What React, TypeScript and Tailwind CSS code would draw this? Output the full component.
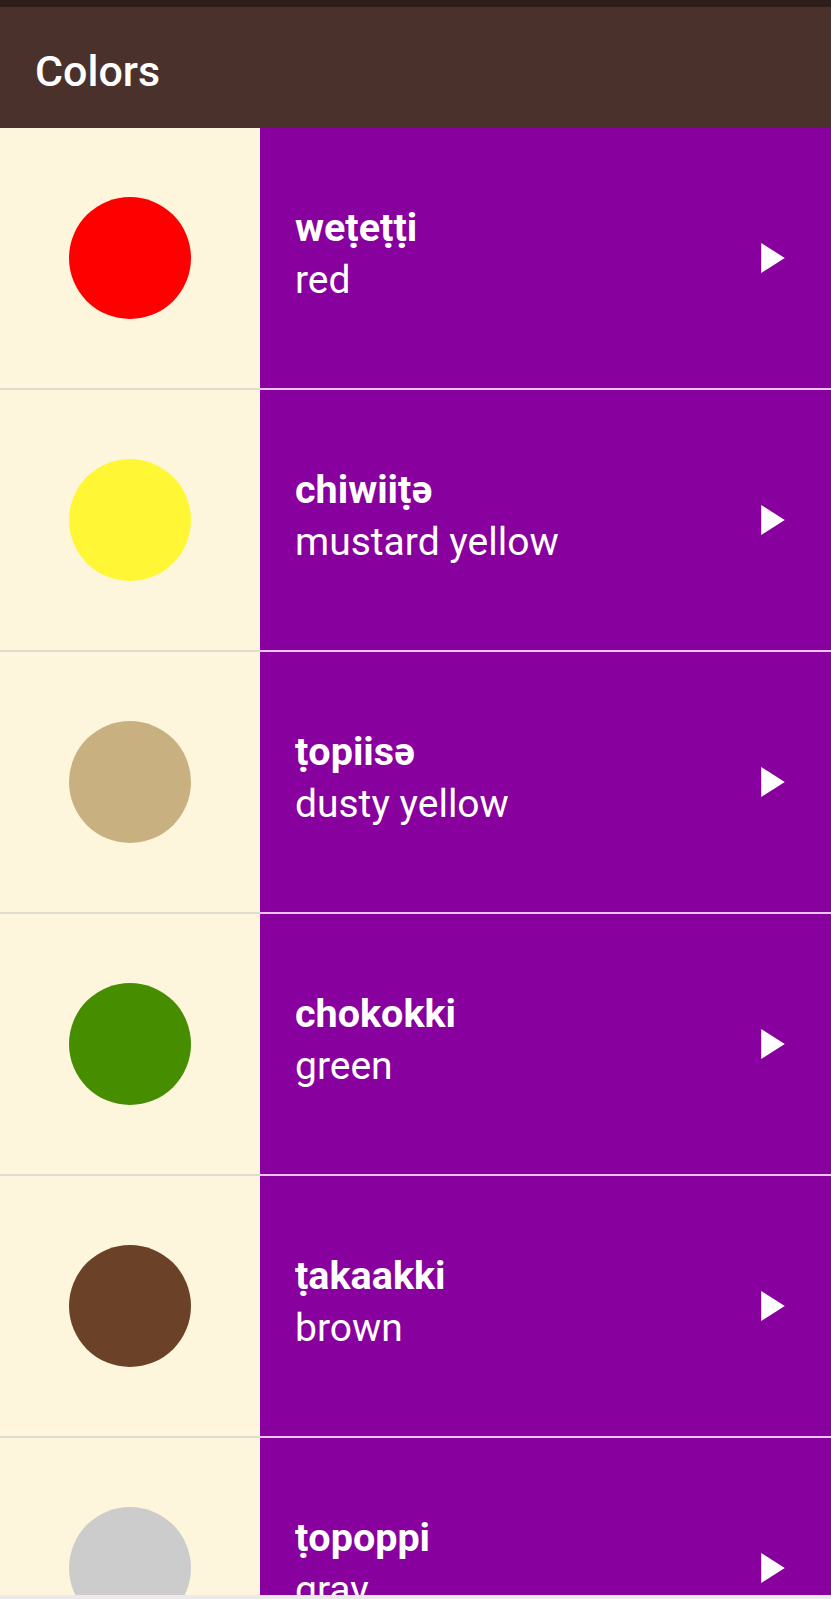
import React from "react";

const items = [
  { word: "weṭeṭṭi", en: "red", color: "#ff0000" },
  { word: "chiwiiṭə", en: "mustard yellow", color: "#fff735" },
  { word: "ṭopiisə", en: "dusty yellow", color: "#c9b080" },
  { word: "chokokki", en: "green", color: "#468d00" },
  { word: "ṭakaakki", en: "brown", color: "#6b4127" },
  { word: "ṭopoppi", en: "gray", color: "#cccccc" },
];

function Arrow() {
  return (
    <svg width="24" height="30" viewBox="0 0 11 14" className="shrink-0">
      <path d="M0 0v14l11-7z" fill="#ffffff" />
    </svg>
  );
}

export default function App() {
  return (
    <div
      className="w-[831px] h-[1599px] overflow-hidden flex flex-col bg-[#fdf6dc]"
      style={{ fontFamily: "Roboto, 'Noto Sans', sans-serif" }}
    >
      <div className="h-[7px] shrink-0 bg-[#2e1e1a]" />
      <div className="h-[121px] shrink-0 bg-[#4b312c] flex items-center pl-[35px] pt-[8px]">
        <span className="text-white text-[43px] font-medium leading-none">Colors</span>
      </div>
      <div className="flex-1 overflow-hidden flex flex-col">
        {items.map((it) => (
          <div key={it.word} className="flex shrink-0 h-[262px]">
            <div className="w-[260px] shrink-0 bg-[#fdf6dc] border-b-2 border-[#dedbd1] flex items-center justify-center">
              <div
                className="w-[122px] h-[122px] rounded-full"
                style={{ backgroundColor: it.color }}
              />
            </div>
            <div className="flex-1 bg-[#88009d] border-b-2 border-[#ebc6f0] flex items-center pl-[35px] pr-[46px]">
              <div className="flex-1 flex flex-col pb-[8px] text-white">
                <span className="text-[39.5px] font-bold leading-[52px]">{it.word}</span>
                <span className="text-[39px] font-normal leading-[52px]">{it.en}</span>
              </div>
              <Arrow />
            </div>
          </div>
        ))}
      </div>
      <div className="h-[4px] shrink-0 bg-[#ece8ec]" />
    </div>
  );
}
